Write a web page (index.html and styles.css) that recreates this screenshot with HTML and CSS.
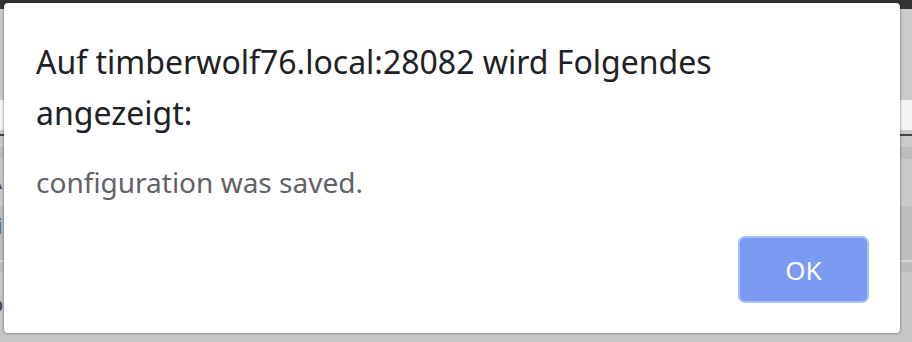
FILE: index.html
```html
<!DOCTYPE html>
<html lang="de">
<head>
<meta charset="utf-8">
<title>Alert</title>
<link rel="stylesheet" href="styles.css">
</head>
<body>
<div class="page">
  <div class="band topbar"></div>
  <div class="band gray1"></div>
  <div class="band light"></div>
  <div class="band gray2"></div>
  <div class="band darkline"></div>
  <div class="band gray3"></div>
  <div class="band mid1"></div>
  <div class="band gray4"><span class="frag fragA">A</span></div>
  <div class="band mid2"><span class="frag fragI">i</span></div>
  <div class="band hairline"></div>
  <div class="band mid3"></div>
  <div class="band gray5"><span class="frag fragO">o</span></div>
</div>
<div class="dialog" role="alertdialog">
  <div class="title">Auf timberwolf76.local:28082 wird Folgendes angezeigt:</div>
  <div class="message">configuration was saved.</div>
  <div class="footer">
    <button class="ok">OK</button>
  </div>
</div>
</body>
</html>
```

FILE: styles.css
```css
html, body {
  margin: 0;
  padding: 0;
}
body {
  width: 912px;
  height: 342px;
  overflow: hidden;
  position: relative;
  font-family: "Noto Sans", "Open Sans", sans-serif;
  background: #c6c6c6;
}
.page {
  display: flex;
  flex-direction: column;
  height: 342px;
}
.band {
  flex: none;
  overflow: hidden;
  position: relative;
}
.topbar { height: 9px; background: #333333; }
.gray1 { height: 91px; background: #cbcbcb; }
.light { height: 30px; background: #f4f4f4; }
.gray2 { height: 4px; background: #cbcbcb; }
.darkline { height: 2px; background: #474747; }
.gray3 { height: 11px; background: #cbcbcb; }
.mid1 { height: 12px; background: #bdbdbd; }
.gray4 { height: 47px; background: #cacaca; }
.mid2 { height: 54px; background: #bebebe; }
.hairline { height: 2px; background: #d8d8d8; }
.mid3 { height: 10px; background: #bcbcbc; }
.gray5 { flex: 1; background: #c6c6c6; }
.frag {
  display: block;
  font-size: 22px;
  line-height: 22px;
  color: #444;
}
.fragA { margin: 10px 0 0 -12px; }
.fragI { margin: 8px 0 0 -3px; color: #4a6a9a; }
.fragO { margin: 20px 0 0 -10px; }

.dialog {
  position: absolute;
  left: 4px;
  top: 3px;
  width: 896px;
  height: 330px;
  box-sizing: border-box;
  background: #ffffff;
  border-radius: 4px;
  box-shadow: 0 0 3px rgba(0, 0, 0, 0.55);
  display: flex;
  flex-direction: column;
  padding: 33px 31px 30px 32px;
}
.title {
  font-size: 32px;
  line-height: 51px;
  color: #202124;
}
.message {
  margin-top: 24px;
  font-size: 28px;
  line-height: 40px;
  color: #5f6368;
}
.footer {
  margin-top: auto;
  display: flex;
  justify-content: flex-end;
}
.ok {
  width: 131px;
  height: 67px;
  box-sizing: border-box;
  border: 2px solid #aabef9;
  border-radius: 7px;
  background: #7b9bf3;
  color: #ffffff;
  font-family: "Noto Sans", "Open Sans", sans-serif;
  font-size: 26px;
  padding: 0;
}
```
